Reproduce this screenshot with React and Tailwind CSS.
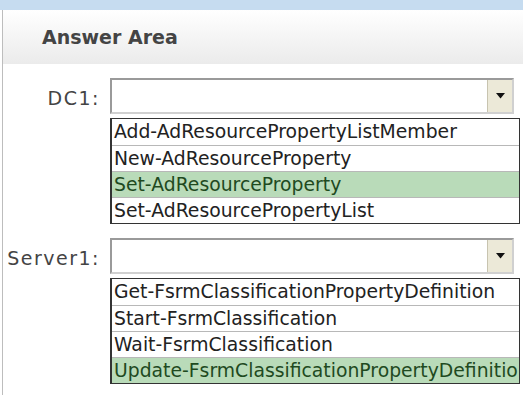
const groups = [
  {
    label: 'DC1:',
    items: [
      'Add-AdResourcePropertyListMember',
      'New-AdResourceProperty',
      'Set-AdResourceProperty',
      'Set-AdResourcePropertyList',
    ],
    selected: 2,
  },
  {
    label: 'Server1:',
    items: [
      'Get-FsrmClassificationPropertyDefinition',
      'Start-FsrmClassification',
      'Wait-FsrmClassification',
      'Update-FsrmClassificationPropertyDefinition',
    ],
    selected: 3,
  },
]

function Combo() {
  return (
    <div className="flex h-[36px] w-[404px] border-2 border-[#9a9a9a] border-r-[#d0d0d0] border-b-[#d0d0d0] bg-white">
      <div className="flex-1" />
      <div className="flex w-[25px] items-center justify-center border-l border-[#c8c4b0] bg-[#ece9d8]">
        <svg width="9" height="6" viewBox="0 0 9 6">
          <path d="M0 0 L9 0 L4.5 5.5 Z" fill="#111" />
        </svg>
      </div>
    </div>
  )
}

function ListBox({ items, selected }) {
  return (
    <div className="w-[410px] overflow-hidden border border-l-2 border-[#333] bg-white">
      {items.map((item, i) => (
        <div
          key={item}
          className={
            'h-[26px] whitespace-nowrap pl-[2px] text-[18.8px] leading-[25px] ' +
            (i > 0 ? 'border-t border-[#b8b8b8] ' : '') +
            (i === selected ? 'bg-[#b9dbb9] text-[#1f4a1f]' : 'text-[#222]')
          }
        >
          {item}
        </div>
      ))}
    </div>
  )
}

export default function App() {
  return (
    <div className="h-[395px] w-[523px] overflow-hidden bg-white font-['DejaVu_Sans',sans-serif]">
      <div className="h-[10px] bg-[#c6dcf0]" />
      <div className="ml-[2px] h-[385px] border-l border-[#bdbdbd]">
        <div className="flex h-[54px] items-center bg-gradient-to-b from-white to-[#ebebeb] pl-[39px] text-[19px] font-semibold text-[#444]">
          Answer Area
        </div>
        <div className="flex flex-col gap-[14px] pt-[14px]">
          {groups.map(g => (
            <div key={g.label} className="flex">
              <div className="w-[107px] pr-[10px] pt-[6px] text-right text-[19px] tracking-[1.5px] text-[#444]">
                {g.label}
              </div>
              <div className="flex flex-col gap-[4px]">
                <Combo />
                <ListBox items={g.items} selected={g.selected} />
              </div>
            </div>
          ))}
        </div>
      </div>
    </div>
  )
}
